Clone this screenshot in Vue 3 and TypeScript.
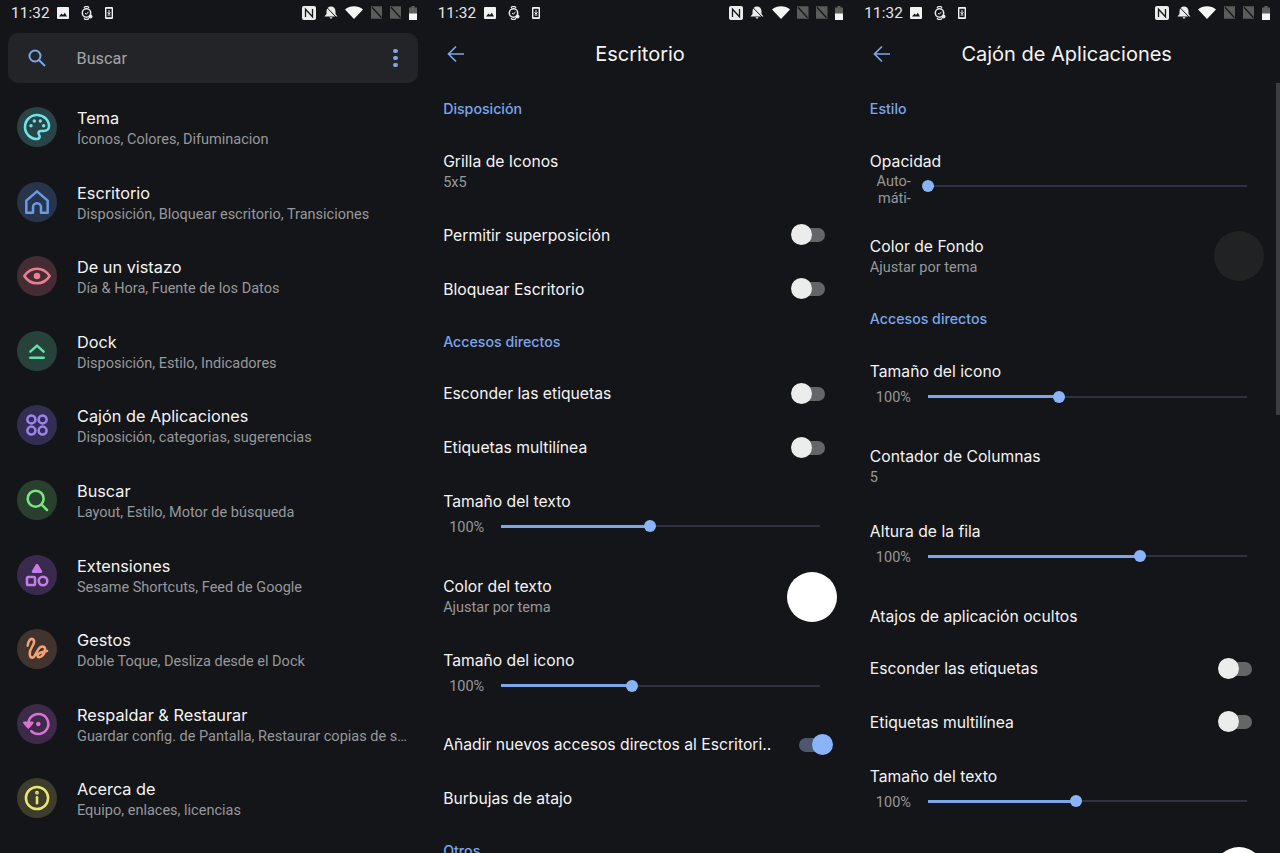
<script setup lang="ts">
interface HomeItem { icon: string; title: string; sub: string; bg: string; fg: string }
type Row =
  | { kind: 'section'; title: string }
  | { kind: 'plain'; title: string }
  | { kind: 'toggle'; title: string; on?: boolean; tight?: boolean }
  | { kind: 'double'; title: string; sub: string; swatch?: string }
  | { kind: 'slider'; title: string; label: string; value: number; wrap?: boolean }

const home: HomeItem[] = [
  { icon: 'palette', title: 'Tema', sub: 'Íconos, Colores, Difuminacion', bg: '#2a4347', fg: '#6fe3e6' },
  { icon: 'house', title: 'Escritorio', sub: 'Disposición, Bloquear escritorio, Transiciones', bg: '#27344a', fg: '#6a9be6' },
  { icon: 'eye', title: 'De un vistazo', sub: 'Día & Hora, Fuente de los Datos', bg: '#452b33', fg: '#ea7f90' },
  { icon: 'dock', title: 'Dock', sub: 'Disposición, Estilo, Indicadores', bg: '#27423a', fg: '#64dfae' },
  { icon: 'apps', title: 'Cajón de Aplicaciones', sub: 'Disposición, categorias, sugerencias', bg: '#332d52', fg: '#9c84f0' },
  { icon: 'search', title: 'Buscar', sub: 'Layout, Estilo, Motor de búsqueda', bg: '#2a402e', fg: '#78e680' },
  { icon: 'shapes', title: 'Extensiones', sub: 'Sesame Shortcuts, Feed de Google', bg: '#3a2b4e', fg: '#c57de8' },
  { icon: 'gesture', title: 'Gestos', sub: 'Doble Toque, Desliza desde el Dock', bg: '#41342e', fg: '#f0a378' },
  { icon: 'restore', title: 'Respaldar & Restaurar', sub: 'Guardar config. de Pantalla, Restaurar copias de seguridad', bg: '#3c2a48', fg: '#d873d4' },
  { icon: 'info', title: 'Acerca de', sub: 'Equipo, enlaces, licencias', bg: '#3d3c2d', fg: '#eae76f' },
]

const desktop: Row[] = [
  { kind: 'section', title: 'Disposición' },
  { kind: 'double', title: 'Grilla de Iconos', sub: '5x5' },
  { kind: 'toggle', title: 'Permitir superposición' },
  { kind: 'toggle', title: 'Bloquear Escritorio' },
  { kind: 'section', title: 'Accesos directos' },
  { kind: 'toggle', title: 'Esconder las etiquetas' },
  { kind: 'toggle', title: 'Etiquetas multilínea' },
  { kind: 'slider', title: 'Tamaño del texto', label: '100%', value: 46.7 },
  { kind: 'double', title: 'Color del texto', sub: 'Ajustar por tema', swatch: '#ffffff' },
  { kind: 'slider', title: 'Tamaño del icono', label: '100%', value: 41 },
  { kind: 'toggle', title: 'Añadir nuevos accesos directos al Escritori..', on: true, tight: true },
  { kind: 'plain', title: 'Burbujas de atajo' },
  { kind: 'section', title: 'Otros' },
]

const drawer: Row[] = [
  { kind: 'section', title: 'Estilo' },
  { kind: 'slider', title: 'Opacidad', label: 'Auto-máti-', value: 0, wrap: true },
  { kind: 'double', title: 'Color de Fondo', sub: 'Ajustar por tema', swatch: '#212223' },
  { kind: 'section', title: 'Accesos directos' },
  { kind: 'slider', title: 'Tamaño del icono', label: '100%', value: 41 },
  { kind: 'double', title: 'Contador de Columnas', sub: '5' },
  { kind: 'slider', title: 'Altura de la fila', label: '100%', value: 66.5 },
  { kind: 'plain', title: 'Atajos de aplicación ocultos' },
  { kind: 'toggle', title: 'Esconder las etiquetas', tight: true },
  { kind: 'toggle', title: 'Etiquetas multilínea' },
  { kind: 'slider', title: 'Tamaño del texto', label: '100%', value: 46.4 },
  { kind: 'double', title: 'Color del texto', sub: 'Ajustar por tema', swatch: '#ffffff' },
]

const panels = [
  { id: 'home', title: '', rows: [] as Row[] },
  { id: 'desktop', title: 'Escritorio', rows: desktop },
  { id: 'drawer', title: 'Cajón de Aplicaciones', rows: drawer },
]
</script>

<template>
  <main class="screen">
    <section v-for="panel in panels" :key="panel.id" class="panel">
      <div class="status">
        <span class="time">11:32</span>
        <svg class="si" width="12" height="12" viewBox="0 0 12 12"><rect width="12" height="12" rx="1" fill="#f2f2f2" /><path d="M2 9.500 4.500 6.500 6 8 7.800 5.800 10 9.500Z" fill="#15161a" /></svg>
        <svg class="si" width="12" height="14" viewBox="0 0 12 14"><circle cx="5.500" cy="7" r="4.200" fill="none" stroke="#e8e8e8" stroke-width="1.500" /><path d="M3 2 4 .6H7L8 2M3 12l1 1.400H7L8 12" fill="none" stroke="#e8e8e8" stroke-width="1.200" /><path d="M4 7l1.300 1.300L7.500 5.800" fill="none" stroke="#e8e8e8" stroke-width="1" /><circle cx="9.500" cy="10.500" r="2" fill="#e8e8e8" /></svg>
        <svg class="si" width="8" height="12" viewBox="0 0 8 12"><rect width="8" height="12" rx="1" fill="#f2f2f2" /><rect x="1.400" y="1.800" width="5.200" height="8.400" fill="#15161a" /><path d="M4 3v3.400M2.600 5.400 4 7l1.400-1.600M2.600 8h2.800" fill="none" stroke="#f2f2f2" /></svg>
        <span class="status-right">
          <svg width="14" height="14" viewBox="0 0 14 14"><rect width="14" height="14" rx="2" fill="#ececec" /><path d="M3.500 11V3.200L10.500 10.800V3" fill="none" stroke="#15161a" stroke-width="1.300" /></svg>
          <svg width="14" height="13" viewBox="0 0 14 13"><path d="M.5 10.500 2.500 8V5.200C2.500 2.500 4.500.6 7 .6s4.500 1.900 4.500 4.600V8l2 2.500ZM5.300 11.300h3.400L7 13Z" fill="#ececec" /><path d="M1.500.2 13.500 12.500" stroke="#15161a" stroke-width="1" /></svg>
          <svg width="18" height="13" viewBox="0 0 18 13"><path d="M0 3.600C5 -.8 13 -.8 18 3.600L9 13Z" fill="#f5f5f5" /></svg>
          <svg width="11.500" height="13" viewBox="0 0 12 13"><path d="M0 0H12V13H0Z" fill="#5b5b5b" /><path d="M1 1 11 12" stroke="#15161a" stroke-width="1.300" /></svg>
          <svg width="11.500" height="13" viewBox="0 0 12 13"><path d="M0 0H12V13H0Z" fill="#5b5b5b" /><path d="M1 1 11 12" stroke="#15161a" stroke-width="1.300" /></svg>
          <svg width="8" height="14" viewBox="0 0 8 14"><path d="M2.500 0h3v1.500H8V14H0V1.500h2.500Z" fill="#5f5f5f" /><path d="M0 7.500H8V14H0Z" fill="#f5f5f5" /></svg>
        </span>
      </div>

      <template v-if="panel.id === 'home'">
        <div class="search">
          <svg width="24" height="24" viewBox="0 0 24 24" fill="none" stroke="#7ba6ec" stroke-width="2"><circle cx="10" cy="10" r="5.500" /><path d="M14 14 20 20" /></svg>
          <span class="search-text">Buscar</span>
          <span class="dots"><i></i><i></i><i></i></span>
        </div>
        <ul class="home-list">
          <li v-for="item in home" :key="item.title" class="home-row">
            <span class="badge" :style="{ background: item.bg, color: item.fg }">
              <svg width="32" height="32" viewBox="0 0 24 24" fill="none" stroke="currentColor" stroke-width="1.900" stroke-linecap="round" stroke-linejoin="round">
                <template v-if="item.icon === 'palette'">
                  <path d="M12 3a9 9 0 1 0 0 18c1.400 0 2-.9 2-1.800 0-1.200-.9-1.400-.9-2.500 0-1 .8-1.700 1.800-1.700H17c2.400 0 4-1.500 4-3.600C21 6.600 17 3 12 3Z" />
                  <g fill="currentColor" stroke="none"><circle cx="7.500" cy="11" r="1.300" /><circle cx="10" cy="7.500" r="1.300" /><circle cx="14.500" cy="7.500" r="1.300" /><circle cx="17" cy="11" r="1.300" /></g>
                </template>
                <path v-else-if="item.icon === 'house'" d="M12 4 4 11v9h5v-4a3 3 0 0 1 6 0v4h5v-9Z" />
                <template v-else-if="item.icon === 'eye'">
                  <path d="M2.500 12C4.800 8.400 8 6.500 12 6.500s7.200 1.900 9.500 5.500c-2.300 3.600-5.500 5.500-9.500 5.500S4.800 15.600 2.500 12Z" />
                  <circle cx="12" cy="12" r="2.500" fill="currentColor" stroke="none" />
                </template>
                <path v-else-if="item.icon === 'dock'" d="M7 12.500 12 8l5 4.500M7 17H17" />
                <g v-else-if="item.icon === 'apps'"><circle cx="7.800" cy="7.800" r="3" /><circle cx="16.200" cy="7.800" r="3" /><circle cx="7.800" cy="16.200" r="3" /><circle cx="16.200" cy="16.200" r="3" /></g>
                <g v-else-if="item.icon === 'search'"><circle cx="11" cy="11" r="6" /><path d="M15.500 15.500 19.500 19.500" /></g>
                <g v-else-if="item.icon === 'shapes'"><path d="M12 4.500 15 9.500H9Z" fill="currentColor" /><rect x="4.500" y="13.500" width="6" height="6" rx="1" /><circle cx="16.500" cy="16.500" r="3.200" /></g>
                <path v-else-if="item.icon === 'gesture'" d="M5 9.500C5.500 6 7 4 8.500 4.500 11 5.500 9.500 8.500 8 11 6 14 6 18.500 8.500 18.500 10.500 18.500 11.500 13.500 14 11 16 9.500 18.500 10 18 13 17.500 17 13.500 19.500 12.500 17.500 12 15.500 15.500 14 19.500 13.500" />
                <g v-else-if="item.icon === 'restore'"><path d="M5.500 12a7.500 7.500 0 1 1 2.200 5.300" /><path d="M2.500 11H8.500L5.500 14.500Z" fill="currentColor" /><circle cx="13" cy="12" r="1.700" fill="currentColor" stroke="none" /></g>
                <g v-else-if="item.icon === 'info'"><circle cx="12" cy="12" r="8.300" /><path d="M12 11.500v4.500" /><circle cx="12" cy="8" r=".5" fill="currentColor" /></g>
              </svg>
            </span>
            <span class="home-text">
              <span class="title">{{ item.title }}</span>
              <span class="sub">{{ item.sub }}</span>
            </span>
          </li>
        </ul>
      </template>

      <template v-else>
        <header class="bar">
          <svg class="back" width="18" height="18" viewBox="0 0 18 18" fill="none" stroke="#7ba6ec" stroke-width="1.700"><path d="M17 9H2M9 1.500 1.500 9 9 16.500" /></svg>
          <h1>{{ panel.title }}</h1>
        </header>
        <div class="rows">
          <template v-for="row in panel.rows" :key="row.title">
            <h2 v-if="row.kind === 'section'" class="section">{{ row.title }}</h2>
            <div v-else-if="row.kind === 'plain'" class="row single"><span class="title">{{ row.title }}</span></div>
            <div v-else-if="row.kind === 'toggle'" class="row single" :class="{ tight: row.tight }">
              <span class="title">{{ row.title }}</span>
              <span class="toggle" :class="{ on: row.on }"><i></i></span>
            </div>
            <div v-else-if="row.kind === 'double'" class="row double">
              <span class="stack"><span class="title">{{ row.title }}</span><span class="sub">{{ row.sub }}</span></span>
              <span v-if="row.swatch" class="swatch" :style="{ background: row.swatch }"></span>
            </div>
            <div v-else class="slider-row">
              <span class="title">{{ row.title }}</span>
              <div class="slider-line">
                <span class="slider-label" :class="{ wrap: row.wrap }">{{ row.label }}</span>
                <span class="track">
                  <span class="fill" :style="{ width: row.value + '%' }"></span>
                  <span class="thumb" :style="{ left: row.value + '%' }"></span>
                </span>
              </div>
            </div>
          </template>
        </div>
        <span v-if="panel.id === 'drawer'" class="scrollbar"></span>
      </template>
    </section>
  </main>
</template>

<style scoped>
.screen {
  display: grid;
  grid-template-columns: repeat(3, 1fr);
  width: 1280px;
  height: 853px;
  overflow: hidden;
  background: #141518;
  color: #f1f1f1;
  font-family: Roboto, "Liberation Sans", sans-serif;
}
.panel { position: relative; height: 853px; overflow: hidden; min-width: 0; }
.status { display: flex; align-items: center; height: 25px; padding: 0 10px 0 11px; gap: 10px; }
.time { font-size: 15.300px; color: #e6e6e6; width: 36px; letter-spacing: .1px; }
.si { flex: none; margin-right: 2px; }
.status-right { display: flex; align-items: center; gap: 7.500px; margin-left: auto; }
.search {
  display: flex;
  align-items: center;
  height: 50px;
  margin: 8px 9px 7px 8px;
  padding: 0 12px 0 17px;
  border-radius: 10px;
  background: #232427;
}
.search-text { flex: 1; margin-left: 27.500px; font-size: 16.300px; color: #a3a4a6; }
.dots { display: flex; flex-direction: column; gap: 2.500px; margin-right: 8px; }
.dots i { width: 4.500px; height: 4.500px; border-radius: 50%; background: #7ba6ec; }
.home-list { list-style: none; margin: 0; padding: 0; }
.home-row { display: flex; align-items: center; height: 74.550px; padding: 0 17px 0 16.500px; min-width: 0; }
.badge { flex: none; display: flex; align-items: center; justify-content: center; width: 40px; height: 40px; border-radius: 50%; margin-right: 20.500px; }
.home-text { display: flex; flex-direction: column; min-width: 0; flex: 1; margin-top: 4px; }
.title {
  font-family: Inter, "Liberation Sans", sans-serif;
  font-size: 15.700px;
  line-height: 21px;
  color: #f4f4f4;
  white-space: nowrap;
}
.home-text .title { font-size: 16.300px; }
.sub {
  font-size: 14.500px;
  line-height: 21px;
  color: #97989b;
  white-space: nowrap;
  overflow: hidden;
  text-overflow: ellipsis;
}
.bar { position: relative; display: flex; align-items: center; justify-content: center; height: 58px; }
.bar h1 { margin: 0; font: 400 20px/1 Inter, "Liberation Sans", sans-serif; color: #f4f4f4; }
.back { position: absolute; left: 20px; top: 20px; }
.rows { display: flex; flex-direction: column; padding-left: 16.500px; }
.section {
  display: flex;
  align-items: center;
  flex: none;
  height: 51px;
  margin: 0;
  padding-top: 1px;
  box-sizing: border-box;
  font: 500 14.200px/1 Inter, "Liberation Sans", sans-serif;
  color: #7ba6ec;
}
.row { display: flex; align-items: center; justify-content: space-between; flex: none; padding-right: 16px; }
.single { height: 53.700px; }
.tight { margin-top: -1px; }
.double { height: 74.600px; padding-top: 1px; box-sizing: border-box; }
.stack { display: flex; flex-direction: column; }
.toggle { position: relative; display: block; width: 34px; height: 22px; margin-right: 12px; }
.toggle::before { content: ""; position: absolute; left: 4px; right: 0; top: 4px; height: 14px; border-radius: 7px; background: #646566; }
.toggle i { position: absolute; left: 0; top: 0; width: 21px; height: 21px; border-radius: 50%; background: #ececec; }
.toggle.on { margin-right: 4px; }
.toggle.on::before { left: 0; right: 4px; background: #4d5870; }
.toggle.on i { left: auto; right: 0; background: #8ab4f8; }
.swatch { width: 50px; height: 50px; border-radius: 50%; margin-top: -1px; }
.slider-row { display: flex; flex-direction: column; flex: none; height: 85px; padding-top: 16.500px; box-sizing: border-box; }
.slider-line { display: flex; align-items: center; height: 30px; margin-top: -.5px; padding-left: 6px; }
.slider-label { flex: none; width: 35px; margin-right: 17px; padding-top: 2px; font-size: 14.500px; line-height: 21px; color: #97989b; white-space: nowrap; }
.slider-label.wrap { align-self: flex-start; height: 30px; margin-top: 2px; padding-top: 0; overflow: hidden; white-space: normal; text-align: right; line-height: 17px; }
.track { position: relative; display: block; flex: none; width: 319px; height: 2px; background: #2d3140; }
.fill { position: absolute; left: 0; top: -.5px; height: 3px; background: #7ba6ec; }
.thumb { position: absolute; top: 1px; width: 12px; height: 12px; margin: -6px 0 0 -6px; border-radius: 50%; background: #8ab4f8; }
.scrollbar { position: absolute; right: 0; top: 83px; width: 4px; height: 332px; background: #3c3d3f; }
</style>

<style>
html, body { background: #141518; }
</style>
